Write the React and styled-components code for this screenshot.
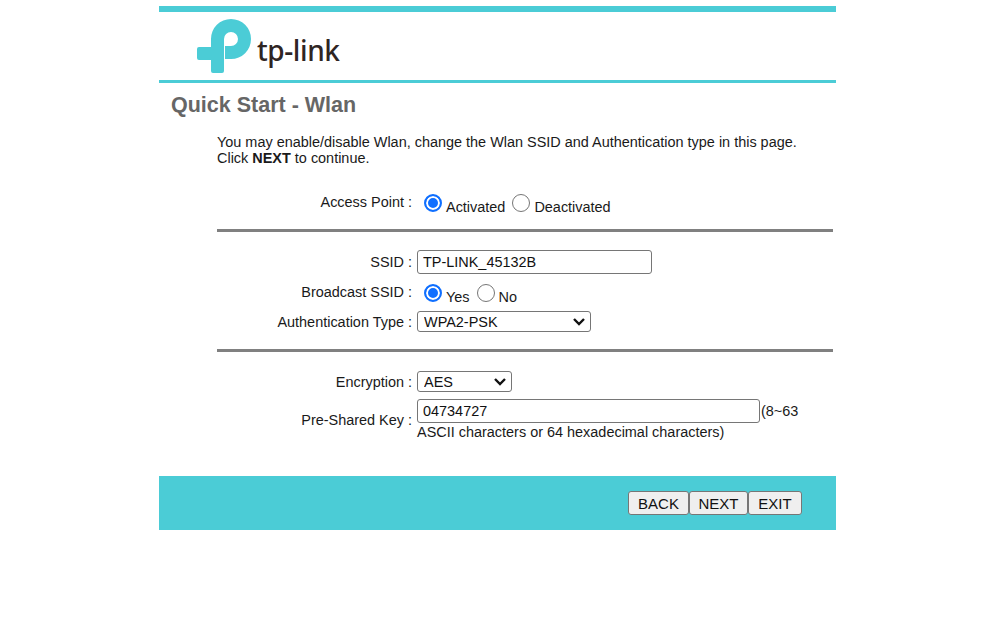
import React from "react";
import styled, { createGlobalStyle } from "styled-components";

const TEAL = "#4bccd6";

const GlobalStyle = createGlobalStyle`
  html, body {
    margin: 0;
    padding: 0;
    background: #fff;
  }
  body {
    font-family: "Liberation Sans", Arial, sans-serif;
    font-size: 14.45px;
    color: #1a1a1a;
  }
`;

const Frame = styled.div`
  width: 677px;
  margin: 0 0 0 159px;
  padding-top: 6px;
`;

const Header = styled.header`
  height: 68px;
  border-top: 6px solid ${TEAL};
  border-bottom: 3px solid ${TEAL};
  display: flex;
  align-items: flex-start;
  padding-left: 38px;
`;

const LogoMark = styled.svg`
  width: 54px;
  height: 54px;
  margin-top: 7px;
  flex: none;
`;

const LogoText = styled.span`
  font-family: "Noto Sans", sans-serif;
  font-weight: 500;
  font-size: 28px;
  line-height: 30px;
  letter-spacing: -0.4px;
  color: #2f2523;
  margin: 23px 0 0 6px;
`;

const Title = styled.h1`
  margin: 0;
  padding: 9px 0 0 12px;
  height: 44px;
  box-sizing: border-box;
  font-size: 21.5px;
  line-height: 26px;
  font-weight: bold;
  color: #666;
`;

const Body = styled.div`
  padding: 7px 3px 0 58px;
`;

const Intro = styled.p`
  margin: 0 0 28px;
  line-height: 16px;
`;

const Row = styled.div`
  display: grid;
  grid-template-columns: 195px 1fr;
  column-gap: 5px;
  align-items: ${(p) => p.$align || "center"};
  min-height: ${(p) => p.$height || 22}px;
  margin-top: ${(p) => p.$top || 0}px;
`;

const Label = styled.label`
  text-align: right;
  white-space: nowrap;
`;

const Divider = styled.hr`
  height: 3px;
  border: 0;
  margin: ${(p) => p.$top}px 0 ${(p) => p.$bottom}px;
  background: #808080;
`;

const RadioGroup = styled.div`
  display: flex;
  align-items: flex-start;
  padding-left: 7px;
`;

const RadioInput = styled.input.attrs({ type: "radio" })`
  appearance: none;
  width: 18px;
  height: 18px;
  margin: 0 4px 0 0;
  border-radius: 50%;
  box-sizing: border-box;
  flex: none;
  background: #fff;
  border: 1px solid #767676;

  &:checked {
    border: 2px solid #0f6fff;
    box-shadow: inset 0 0 0 2px #fff;
    background: #0f6fff;
  }
`;

const RadioText = styled.span`
  margin: 5px 7px 0 0;
  line-height: 17px;
`;

const TextInput = styled.input.attrs({ type: "text" })`
  box-sizing: border-box;
  width: ${(p) => p.$width}px;
  height: 24px;
  padding: 0 5px;
  border: 1px solid #767676;
  border-radius: 3px;
  background: #fff;
  font: inherit;
  color: #111;
  outline: none;
`;

const SelectWrap = styled.div`
  position: relative;
  width: ${(p) => p.$width}px;
  height: 21px;
`;

const Select = styled.select`
  appearance: none;
  box-sizing: border-box;
  width: 100%;
  height: 100%;
  padding: 0 6px;
  border: 1px solid #767676;
  border-radius: 3px;
  background: #fff;
  font: inherit;
  color: #111;
`;

const Chevron = styled.svg`
  position: absolute;
  right: 5px;
  top: 6px;
  width: 14px;
  height: 9px;
  pointer-events: none;
`;

const Hint = styled.div`
  line-height: 17px;
  margin-top: 1px;
`;

const KeyLine = styled.div`
  display: flex;
  align-items: flex-start;
  line-height: 17px;
`;

const KeySuffix = styled.span`
  margin: 4px 0 0 1px;
`;

const Footer = styled.footer`
  height: 54px;
  margin-top: 35px;
  background: ${TEAL};
  display: flex;
  justify-content: flex-end;
  align-items: flex-start;
  padding: 15px 34px 0 0;
  box-sizing: border-box;
`;

const Button = styled.button`
  box-sizing: border-box;
  width: ${(p) => p.$width}px;
  height: 24px;
  padding: 0;
  border: 1px solid #767676;
  border-radius: 3px;
  background: #efefef;
  font: inherit;
  font-size: 15px;
  color: #111;
`;

const SelectField = ({ width, value }) => (
  <SelectWrap $width={width}>
    <Select defaultValue={value}>
      <option>{value}</option>
    </Select>
    <Chevron viewBox="0 0 14 9">
      <path d="M2 2l5 5 5-5" fill="none" stroke="#111" strokeWidth="2.4" />
    </Chevron>
  </SelectWrap>
);

const App = () => {
  return (
    <>
      <GlobalStyle />
      <Frame>
        <Header>
          <LogoMark viewBox="0 0 54 54">
            <path
              fill={TEAL}
              d="M14 20A20 20 0 0 1 34 0A20 20 0 0 1 54 20A20 20 0 0 1 34 40H28V27H34A7 7 0 1 0 27 20V52a2 2 0 0 1-2 2H16a2 2 0 0 1-2-2V41H2a2 2 0 0 1-2-2V30a2 2 0 0 1 2-2H14Z"
            />
          </LogoMark>
          <LogoText>tp-link</LogoText>
        </Header>
        <Title>Quick Start - Wlan</Title>
        <Body>
          <Intro>
            You may enable/disable Wlan, change the Wlan SSID and Authentication type in this page.
            <br />
            Click <b>NEXT</b> to continue.
          </Intro>
          <Row $height={24} $align="start">
            <Label>Access Point :</Label>
            <RadioGroup>
              <RadioInput name="ap" defaultChecked />
              <RadioText>Activated</RadioText>
              <RadioInput name="ap" />
              <RadioText>Deactivated</RadioText>
            </RadioGroup>
          </Row>
          <Divider $top={11} $bottom={18} />
          <Row $height={24}>
            <Label>SSID :</Label>
            <TextInput $width={235} defaultValue="TP-LINK_45132B" />
          </Row>
          <Row $height={24} $top={10} $align="start">
            <Label>Broadcast SSID :</Label>
            <RadioGroup>
              <RadioInput name="broadcast" defaultChecked />
              <RadioText>Yes</RadioText>
              <RadioInput name="broadcast" />
              <RadioText>No</RadioText>
            </RadioGroup>
          </Row>
          <Row $height={21} $top={3}>
            <Label>Authentication Type :</Label>
            <SelectField width={174} value="WPA2-PSK" />
          </Row>
          <Divider $top={17} $bottom={19} />
          <Row $height={21}>
            <Label>Encryption :</Label>
            <SelectField width={95} value="AES" />
          </Row>
          <Row $height={41} $top={7}>
            <Label>Pre-Shared Key :</Label>
            <div>
              <KeyLine>
                <TextInput $width={343} defaultValue="04734727" />
                <KeySuffix>(8~63</KeySuffix>
              </KeyLine>
              <Hint>ASCII characters or 64 hexadecimal characters)</Hint>
            </div>
          </Row>
        </Body>
        <Footer>
          <Button $width={61}>BACK</Button>
          <Button $width={59}>NEXT</Button>
          <Button $width={54}>EXIT</Button>
        </Footer>
      </Frame>
    </>
  );
};

export default App;
